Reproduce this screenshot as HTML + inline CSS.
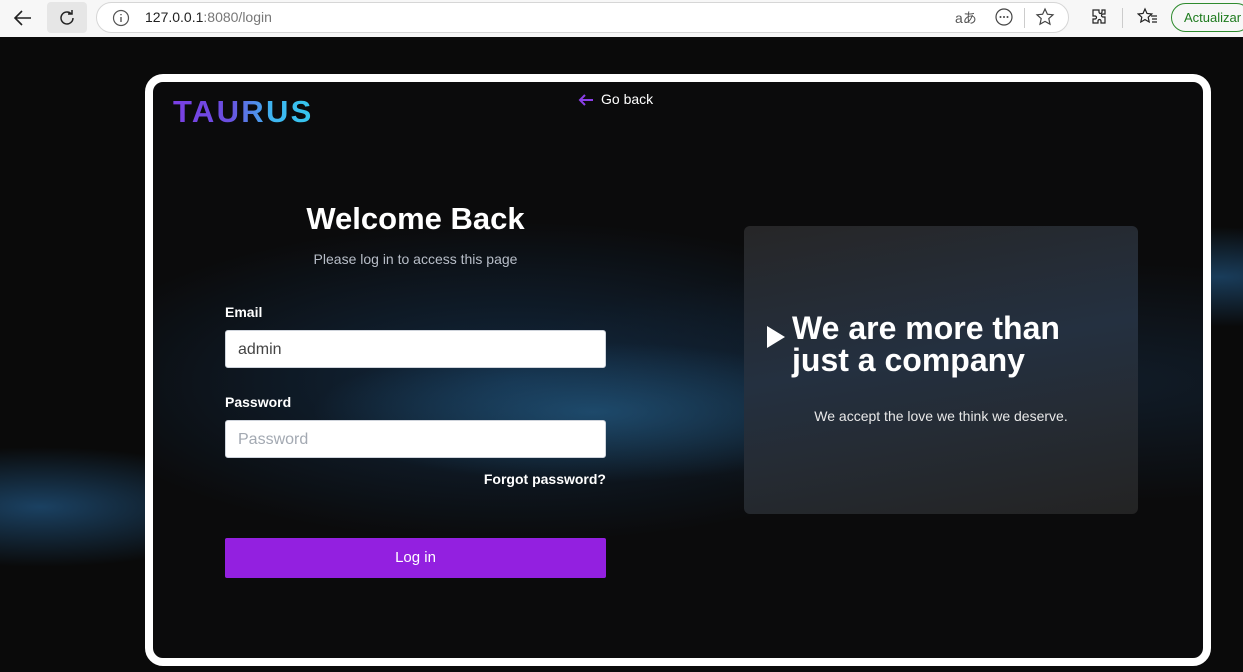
<!DOCTYPE html>
<html><head><meta charset="utf-8"><style>
*{box-sizing:border-box;margin:0;padding:0}
body{width:1243px;height:672px;overflow:hidden;font-family:"Liberation Sans",sans-serif;background:#0a0a0a;position:relative}
.chrome{position:absolute;left:0;top:0;width:1243px;height:37px;background:#f7f7f7}
.url{position:absolute;left:96px;top:2px;width:973px;height:31px;border:1px solid #d6d6d6;border-radius:16px;background:#fff}
.page{position:absolute;left:0;top:37px;width:1243px;height:635px;overflow:hidden;
background:
radial-gradient(ellipse 220px 60px at 40px 470px,rgba(40,110,170,.55),transparent),
radial-gradient(ellipse 200px 50px at 1220px 240px,rgba(40,110,170,.5),transparent),
#0a0a0a}
.frame{position:absolute;left:145px;top:74px;width:1066px;height:592px;border:8px solid #fff;border-radius:18px;overflow:hidden;
background:
radial-gradient(ellipse 280px 70px at 440px 330px,rgba(35,90,130,.7),transparent),
radial-gradient(ellipse 450px 160px at 360px 300px,rgba(20,50,80,.75),transparent),
radial-gradient(ellipse 600px 120px at 900px 300px,rgba(30,70,110,.3),transparent),
#0b0b0c}
.abs{position:absolute}
.logo{left:20px;top:12px;font-size:31px;font-weight:bold;letter-spacing:2.3px;background:linear-gradient(90deg,#7b3fe4,#6a4fe0 40%,#3fb5f0 70%,#35c8ee);-webkit-background-clip:text;color:transparent}
.input{position:absolute;left:72px;width:381px;height:38px;background:#fff;border:1px solid #cfd4dc;border-radius:3px;font-size:16px;padding:10px 12px;color:#444}
.lbl{position:absolute;left:72px;font-size:14px;font-weight:bold;color:#fff}
.card{position:absolute;left:591px;top:144px;width:394px;height:288px;border-radius:6px;background:linear-gradient(170deg,#262627 0%,#243040 45%,#252b33 70%,#232323 100%)}
</style></head><body>
<div class="chrome">
<svg class="abs" style="left:12px;top:8px" width="22" height="20" viewBox="0 0 22 20"><path d="M19 10H4M10 3L3 10l7 7" stroke="#222" stroke-width="1.6" fill="none"/></svg>
<div class="abs" style="left:47px;top:2px;width:40px;height:31px;background:#e6e6e6;border-radius:4px"></div>
<svg class="abs" style="left:57px;top:8px" width="20" height="20" viewBox="0 0 20 20"><path d="M16 10a6 6 0 1 1-2-4.5M15 2v4h-4" stroke="#222" stroke-width="1.5" fill="none"/></svg>
<div class="url"></div>
<svg class="abs" style="left:112px;top:9px" width="18" height="18" viewBox="0 0 18 18"><circle cx="9" cy="9" r="7.5" stroke="#555" fill="none" stroke-width="1.2"/><path d="M9 8v5M9 5v1.2" stroke="#555" stroke-width="1.4"/></svg>
<div class="abs" style="left:145px;top:9px;font-size:14px;color:#222">127.0.0.1<span style="color:#777">:8080/login</span></div>
<div class="abs" style="left:955px;top:8px;font-size:14px;color:#555">aあ</div>
<svg class="abs" style="left:994px;top:7px" width="20" height="20" viewBox="0 0 20 20"><circle cx="10" cy="10" r="8" stroke="#444" fill="none" stroke-width="1.2"/><circle cx="6.5" cy="10" r="1" fill="#444"/><circle cx="10" cy="10" r="1" fill="#444"/><circle cx="13.5" cy="10" r="1" fill="#444"/></svg>
<div class="abs" style="left:1024px;top:8px;width:1px;height:20px;background:#ccc"></div>
<svg class="abs" style="left:1035px;top:7px" width="20" height="20" viewBox="0 0 20 20"><path d="M10 2l2.4 5.2 5.6.6-4.2 3.8 1.2 5.6L10 14.4 5 17.2l1.2-5.6L2 7.8l5.6-.6z" stroke="#444" fill="none" stroke-width="1.2"/></svg>
<svg class="abs" style="left:1089px;top:7px" width="20" height="20" viewBox="0 0 20 20"><path d="M7 3h3v2a1.5 1.5 0 0 0 3 0V3h3v4h-2a1.5 1.5 0 0 0 0 3h2v6h-4v-2a1.5 1.5 0 0 0-3 0v2H4v-4h2a1.5 1.5 0 0 0 0-3H4V3z" stroke="#222" fill="none" stroke-width="1.2"/></svg>
<div class="abs" style="left:1122px;top:8px;width:1px;height:20px;background:#ccc"></div>
<svg class="abs" style="left:1137px;top:7px" width="22" height="20" viewBox="0 0 22 20"><path d="M8 2l2 4.5 4.8.5-3.6 3.2 1 4.8L8 12.6 3.8 15l1-4.8L1.2 7 6 6.5z" stroke="#222" fill="none" stroke-width="1.2"/><path d="M14 9h6M15 12h5M15 15h5" stroke="#222" stroke-width="1.2"/></svg>
<div class="abs" style="left:1171px;top:3px;width:80px;height:29px;border:1px solid #2e8b2e;border-radius:15px;font-size:13px;color:#1e7b1e;padding:6px 0 0 12px">Actualizar</div>
</div>
<div class="page"></div>
<div class="frame">
<div class="abs logo">TAURUS</div>
<svg class="abs" style="left:425px;top:11px" width="16" height="14" viewBox="0 0 16 14"><path d="M15 7H2M7 2L2 7l5 5" stroke="#8b3fe8" stroke-width="2" fill="none"/></svg>
<div class="abs" style="left:448px;top:9px;font-size:14px;color:#fff">Go back</div>
<div class="abs" style="left:62px;top:119px;width:401px;text-align:center;font-size:31px;font-weight:bold;color:#fff">Welcome Back</div>
<div class="abs" style="left:72px;top:169px;width:381px;text-align:center;font-size:14px;color:#b8bec8">Please log in to access this page</div>
<div class="lbl" style="top:222px">Email</div>
<div class="input" style="top:248px">admin</div>
<div class="lbl" style="top:312px">Password</div>
<div class="input" style="top:338px;color:#a3a9b2">Password</div>
<div class="abs" style="left:72px;top:389px;width:381px;text-align:right;font-size:14px;font-weight:bold;color:#fff">Forgot password?</div>
<div class="abs" style="left:72px;top:456px;width:381px;height:40px;background:#9320e0;border-radius:2px;color:#fff;font-size:15px;text-align:center;line-height:40px">Log in</div>
<div class="card">
<svg class="abs" style="left:22px;top:99px" width="20" height="24" viewBox="0 0 20 24"><path d="M1 1l18 11L1 23z" fill="#fff"/></svg>
<div class="abs" style="left:48px;top:86px;font-size:32px;font-weight:bold;color:#fff;line-height:32px;white-space:nowrap">We are more than<br>just a company</div>
<div class="abs" style="left:0;top:182px;width:394px;text-align:center;font-size:14px;color:#e8e8e8">We accept the love we think we deserve.</div>
</div>
</div>
</body></html>
